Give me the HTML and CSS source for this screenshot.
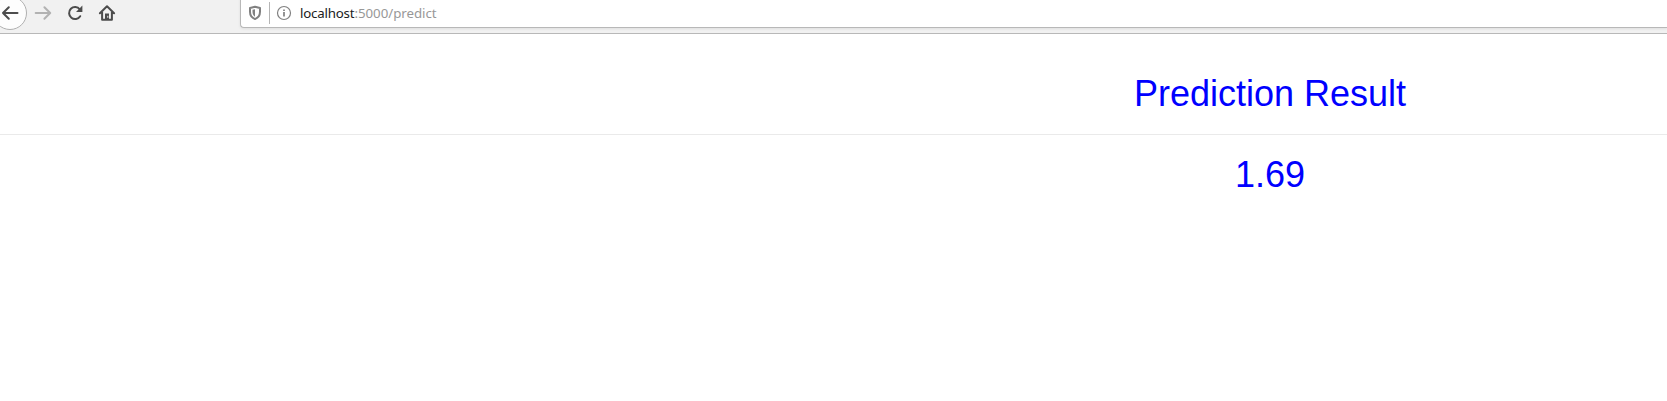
FILE: index.html
```html
<!DOCTYPE html>
<html lang="en">
<head>
<meta charset="utf-8">
<title>Prediction Result</title>
<link rel="stylesheet" href="styles.css">
</head>
<body>
<header class="toolbar">
  <nav class="nav">
    <button class="button back" aria-label="Back"><svg width="20" height="20" viewBox="0 0 20 20"><path d="M17.5 10H3M8.8 4.2 3 10l5.8 5.8"/></svg></button>
    <button class="button forward" aria-label="Forward"><svg width="20" height="20" viewBox="0 0 20 20"><path d="M2.7 10H17M11.4 4.2 17.2 10l-5.8 5.8"/></svg></button>
    <button class="button" aria-label="Reload"><svg width="20" height="20" viewBox="0 0 20 20"><path d="M15.2 13.2A6 6 0 1 1 14.8 6.3"/><path class="solid" d="M17.4 2.5v6.4h-6.4z"/></svg></button>
    <button class="button" aria-label="Home"><svg width="20" height="20" viewBox="0 0 20 20"><path d="M2.9 10.2 10 3.3l7.1 6.9M5.1 9v7.8h9.8V9"/><path class="solid" d="M8 10.5h4v6.3H8z"/><path class="knob" d="M10.8 13.2v1.2"/></svg></button>
  </nav>
  <div class="address">
    <svg class="shield" width="14" height="16" viewBox="0 0 14 16"><path d="M7 1.8 12 3v3.8c0 3.5-2 6.1-5 7.3-3-1.2-5-3.8-5-7.3V3z"/><path class="solid" d="M7 4.2v7.5C5.2 10.5 4.5 8.8 4.5 6.8v-2z"/></svg>
    <span class="divider"></span>
    <svg class="info" width="16" height="16" viewBox="0 0 16 16"><circle cx="8" cy="8" r="6.5"/><path class="stem" d="M8 7.1v4.4M8 4.4v1.7"/></svg>
    <span class="url"><span class="host">localhost</span><span class="path">:5000/predict</span></span>
  </div>
</header>
<main class="page">
  <h1 class="heading">Prediction Result</h1>
  <hr class="rule">
  <h1 class="heading value">1.69</h1>
</main>
</body>
</html>
```
FILE: styles.css
```css
* { box-sizing: border-box; }
body { margin: 0; background: #fff; font-family: "Liberation Sans", Arial, sans-serif; }
.toolbar { display: flex; align-items: flex-start; height: 34px; background: #f1f1f1; border-bottom: 1px solid #b8b8b8; overflow: hidden; }
.nav { display: flex; flex: none; width: 240px; height: 26px; align-items: center; }
.button { display: flex; flex: none; align-items: center; justify-content: center; width: 32px; height: 32px; padding: 0; border: 0; background: none; }
.button svg { fill: none; stroke: #4c4c4c; stroke-width: 2; stroke-linecap: round; stroke-linejoin: round; }
.back { width: 34px; height: 34px; margin-left: -7px; border: 1px solid #b0b0b0; border-radius: 50%; background: #fdfdfd; }
.forward svg { stroke: #b2b2b2; }
.button svg .solid { fill: #4c4c4c; stroke: none; }
.button svg .knob { stroke: #f1f1f1; stroke-width: 1; }
.address { display: flex; flex: 1; align-items: center; height: 32px; margin-top: -4px; padding-left: 7px; background: #fff; border: 1px solid #b8b8b8; border-right: 0; border-radius: 4px 0 0 4px; box-shadow: 0 1px 3px rgba(0,0,0,.08); }
.address svg { flex: none; fill: none; stroke: #808080; margin-top: 2px; }
.shield { stroke-width: 2; stroke-linejoin: round; }
.shield .solid { fill: #808080; stroke: none; }
.divider { width: 1px; height: 22px; margin: 2px 6px 0 7px; background: #b5b5b5; }
.info { stroke-width: 1.2; }
.info .stem { stroke-width: 1.7; }
.url { margin: 1px 0 0 8px; font: 13.3px/20px "Noto Sans", sans-serif; white-space: nowrap; }
.host { color: #202020; letter-spacing: -.2px; }
.path { color: #989898; letter-spacing: -.03px; }
.page { padding: 40px 0 0 873px; text-align: center; color: #00f; }
.heading { margin: 0; font-size: 36px; line-height: 40px; font-weight: 400; }
.rule { height: 1px; margin: 20px 0 20px -873px; border: 0; background: #eaeaea; }
```
